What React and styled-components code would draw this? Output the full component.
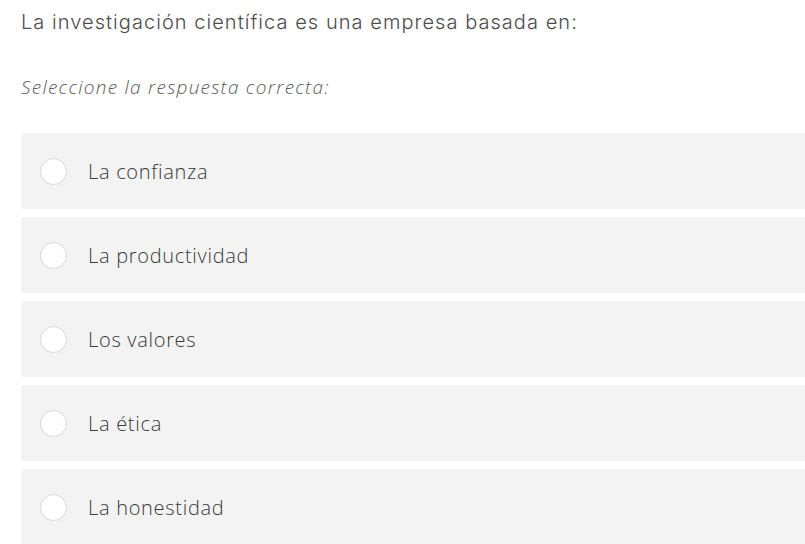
import React from 'react';
import styled, { createGlobalStyle } from 'styled-components';

const GlobalStyle = createGlobalStyle`
  html, body {
    margin: 0;
    padding: 0;
    background: #fff;
    overflow: hidden;
  }
`;

const Page = styled.div`
  width: 805px;
  height: 544px;
  padding-left: 21px;
  box-sizing: border-box;
  overflow: hidden;
`;

const Question = styled.p`
  margin: 0;
  padding-top: 10px;
  height: 34px;
  line-height: 24px;
  font-family: Inter, "Noto Sans", sans-serif;
  font-weight: 300;
  font-size: 20px;
  letter-spacing: 1.05px;
  color: #4d4d4d;
`;

const Hint = styled.p`
  margin: 0;
  padding-top: 31px;
  line-height: 24px;
  font-family: "Open Sans", "Noto Sans", sans-serif;
  font-style: italic;
  font-weight: 300;
  font-size: 19px;
  letter-spacing: 1.25px;
  color: #5a5a5a;
`;

const Options = styled.div`
  display: flex;
  flex-direction: column;
  gap: 8px;
  margin-top: 34px;
`;

const Option = styled.label`
  display: flex;
  align-items: center;
  gap: 21px;
  height: 76px;
  padding-left: 19px;
  background: #f3f3f3;
  border-radius: 3px 0 0 3px;
  cursor: pointer;
`;

const Radio = styled.span`
  width: 25px;
  height: 25px;
  border-radius: 50%;
  background: #fff;
  border: 1px solid #d6d6d6;
  flex-shrink: 0;
`;

const Label = styled.span`
  font-family: "Open Sans", "Noto Sans", sans-serif;
  font-weight: 300;
  font-size: 20px;
  letter-spacing: 0.7px;
  color: #3a3a3a;
`;

const answers = [
  'La confianza',
  'La productividad',
  'Los valores',
  'La ética',
  'La honestidad',
];

export default function App() {
  return (
    <Page>
      <GlobalStyle />
      <Question>La investigación científica es una empresa basada en:</Question>
      <Hint>Seleccione la respuesta correcta:</Hint>
      <Options>
        {answers.map((a) => (
          <Option key={a}>
            <Radio />
            <Label>{a}</Label>
          </Option>
        ))}
      </Options>
    </Page>
  );
}
